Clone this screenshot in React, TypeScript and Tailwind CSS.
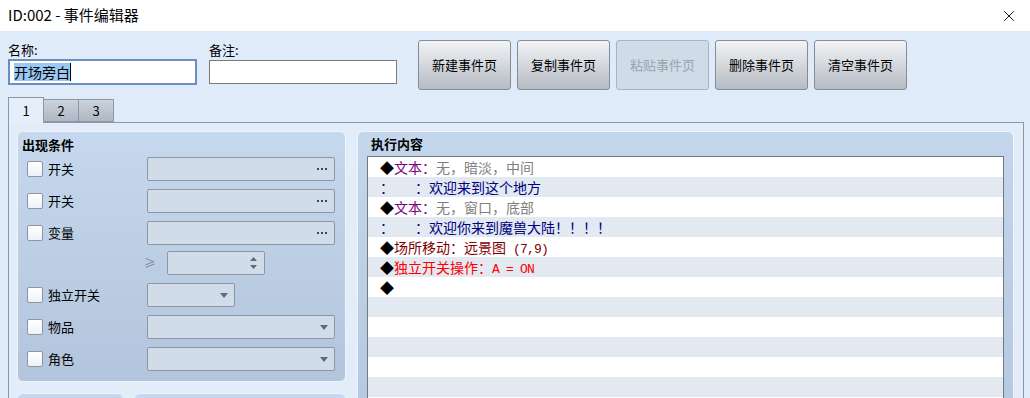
import { X } from 'lucide-react';

const ui = { fontFamily: '"Noto Sans CJK SC", "Noto Sans", sans-serif' };
const mono = { fontFamily: '"Liberation Mono", "Noto Sans CJK SC", monospace' };

function Checkbox() {
  return (
    <div className="w-4 h-4 rounded-[2px] border border-[#8b97a6] bg-gradient-to-b from-white to-[#eef2f6] shrink-0" />
  );
}

function Field({ kind, width = 'w-[188px]' }: { kind: 'dots' | 'drop' | 'spin'; width?: string }) {
  return (
    <div
      className={`${width} h-6 rounded-[2px] border border-[#8b97a6] bg-[#d0dce8] flex items-center justify-end pr-[6px] shrink-0`}
    >
      {kind === 'dots' && (
        <div className="flex gap-[2px] pr-px">
          <span className="w-[2px] h-[2px] bg-[#3a4550]" />
          <span className="w-[2px] h-[2px] bg-[#3a4550]" />
          <span className="w-[2px] h-[2px] bg-[#3a4550]" />
        </div>
      )}
      {kind === 'drop' && (
        <svg width="8" height="5" viewBox="0 0 8 5">
          <path d="M0 0h8L4 5z" fill="#5f6b78" />
        </svg>
      )}
      {kind === 'spin' && (
        <div className="flex flex-col gap-[4px] pr-[1px]">
          <svg width="7" height="4" viewBox="0 0 7 4">
            <path d="M0 4h7L3.5 0z" fill="#5f6b78" />
          </svg>
          <svg width="7" height="4" viewBox="0 0 7 4">
            <path d="M0 0h7L3.5 4z" fill="#5f6b78" />
          </svg>
        </div>
      )}
    </div>
  );
}

function CondRow({ label, kind, width }: { label: string; kind: 'dots' | 'drop'; width?: string }) {
  return (
    <div className="flex items-center h-6">
      <div className="w-[129px] flex items-center gap-[5px] pl-[9px]">
        <Checkbox />
        <span className="text-[13px] text-black">{label}</span>
      </div>
      <Field kind={kind} width={width} />
    </div>
  );
}

function Btn({ label, disabled }: { label: string; disabled?: boolean }) {
  return (
    <div
      className={
        disabled
          ? 'w-[93px] h-[50px] rounded-[3px] border border-[#a9b4c0] bg-[#cfdbe7] flex items-center justify-center text-[13px] text-[#9aa5b1]'
          : 'w-[93px] h-[50px] rounded-[3px] border border-[#858c95] bg-gradient-to-b from-[#f2f3f5] to-[#b6bcc4] flex items-center justify-center text-[13px] text-black'
      }
    >
      {label}
    </div>
  );
}

type Part = { t: string; c: string; m?: boolean };

const lines: Part[][] = [
  [{ t: '◆', c: '#000000' }, { t: '文本：', c: '#800080' }, { t: '无，暗淡，中间', c: '#808080' }],
  [{ t: '：　　', c: '#000080' }, { t: '：欢迎来到这个地方', c: '#000080' }],
  [{ t: '◆', c: '#000000' }, { t: '文本：', c: '#800080' }, { t: '无，窗口，底部', c: '#808080' }],
  [{ t: '：　　', c: '#000080' }, { t: '：欢迎你来到魔兽大陆！！！！', c: '#000080' }],
  [{ t: '◆', c: '#000000' }, { t: '场所移动：远景图', c: '#800000' }, { t: ' (7,9)', c: '#800000', m: true }],
  [{ t: '◆', c: '#000000' }, { t: '独立开关操作：', c: '#ff0000' }, { t: 'A = ON', c: '#ff0000', m: true }],
  [{ t: '◆', c: '#000000' }],
];

export default function App() {
  const rows: Part[][] = [...lines, ...Array.from({ length: 6 }, () => [] as Part[])];

  return (
    <div className="w-[1030px] h-[398px] overflow-hidden bg-[#e0ebfa] flex flex-col" style={ui}>
      {/* Title bar */}
      <div className="h-[31px] bg-white flex items-center justify-between pl-2 pr-[12px] shrink-0">
        <span className="text-[15px] text-black">ID:002 - 事件编辑器</span>
        <X size={18} strokeWidth={1.2} className="text-black" />
      </div>

      <div className="flex-1 flex flex-col px-2 pt-[9px] min-h-0">
        {/* Name / note / buttons */}
        <div className="flex shrink-0">
          <div className="flex flex-col w-[189px]">
            <span className="text-[13px] leading-[19px] text-black">名称:</span>
            <div className="h-[26px] border-2 border-[#6b8fbd] bg-white flex items-center pl-[4px]">
              <span className="text-[14px] leading-[18px] bg-[#99c8f2] text-black">开场旁白</span>
              <span className="w-px h-[18px] bg-black" />
            </div>
          </div>
          <div className="flex flex-col w-[188px] ml-[12px]">
            <span className="text-[13px] leading-[19px] text-black">备注:</span>
            <div className="h-6 mt-px border border-[#7a7a7a] bg-white" />
          </div>
          <div className="flex gap-[6px] ml-[21px]">
            <Btn label="新建事件页" />
            <Btn label="复制事件页" />
            <Btn label="粘贴事件页" disabled />
            <Btn label="删除事件页" />
            <Btn label="清空事件页" />
          </div>
        </div>

        {/* Tabs */}
        <div className="flex items-end h-[25px] mt-[7px] shrink-0">
          <div className="w-[36px] h-[26px] border border-b-0 border-[#8b97a6] bg-[#e6eefa] flex items-center justify-center text-[13px] text-black relative z-10 -mb-px">
            1
          </div>
          <div className="w-[35px] h-[23px] border border-l-0 border-[#8b97a6] bg-gradient-to-b from-[#cbd3dc] to-[#aeb8c3] flex items-center justify-center text-[13px] text-black">
            2
          </div>
          <div className="w-[35px] h-[23px] border border-l-0 border-[#8b97a6] bg-gradient-to-b from-[#cbd3dc] to-[#aeb8c3] flex items-center justify-center text-[13px] text-black">
            3
          </div>
        </div>

        {/* Tab page */}
        <div className="flex-1 w-[1016px] border border-[#8b97a6] border-b-0 bg-[#e3ecf9] flex gap-[11px] pl-[8px] pt-[8px] min-h-0">
          {/* Left column */}
          <div className="w-[329px] flex flex-col gap-[11px] shrink-0">
            <div className="h-[251px] rounded-[6px] border border-[#eef4fc] bg-gradient-to-b from-[#c5d8ed] to-[#b2c5dc] flex flex-col shrink-0">
              <div className="h-[25px] pl-[4px] flex items-center text-[13px] font-bold text-black">出现条件</div>
              <div className="flex flex-col gap-2">
                <CondRow label="开关" kind="dots" />
                <CondRow label="开关" kind="dots" />
                <CondRow label="变量" kind="dots" />
              </div>
              <div className="flex items-center h-6 mt-[6px]">
                <span className="w-[140px] text-right pr-[2px] text-[12px] text-[#7b8796]">≥</span>
                <span className="w-[9px]" />
                <Field kind="spin" width="w-[98px]" />
              </div>
              <div className="flex flex-col gap-2 mt-2">
                <CondRow label="独立开关" kind="drop" width="w-[88px]" />
                <CondRow label="物品" kind="drop" />
                <CondRow label="角色" kind="drop" />
              </div>
            </div>
            <div className="flex gap-[10px] flex-1">
              <div className="w-[107px] h-[80px] rounded-[6px] border border-[#eef4fc] bg-[#c5d8ed]" />
              <div className="w-[212px] h-[80px] rounded-[6px] border border-[#eef4fc] bg-[#c5d8ed]" />
            </div>
          </div>

          {/* Right column */}
          <div className="w-[657px] rounded-t-[6px] border border-b-0 border-[#eef4fc] bg-gradient-to-b from-[#c4d6eb] to-[#b5c9e0] flex flex-col px-[9px] min-h-0">
            <div className="h-[24px] pl-[4px] flex items-center text-[13px] font-bold text-black shrink-0">执行内容</div>
            <div className="flex-1 border border-b-0 border-[#6f7a86] bg-white overflow-hidden">
              {rows.map((row, i) => (
                <div
                  key={i}
                  className={`h-5 pl-[12px] text-[14px] leading-5 whitespace-pre ${i % 2 === 1 ? 'bg-[#e2e9f0]' : 'bg-white'}`}
                >
                  {row.map((p, j) => (
                    <span
                      key={j}
                      className={p.m ? 'text-[13px] tracking-[-0.8px]' : ''}
                      style={p.m ? { ...mono, color: p.c } : { color: p.c }}
                    >
                      {p.t}
                    </span>
                  ))}
                </div>
              ))}
            </div>
          </div>
        </div>
      </div>
    </div>
  );
}
